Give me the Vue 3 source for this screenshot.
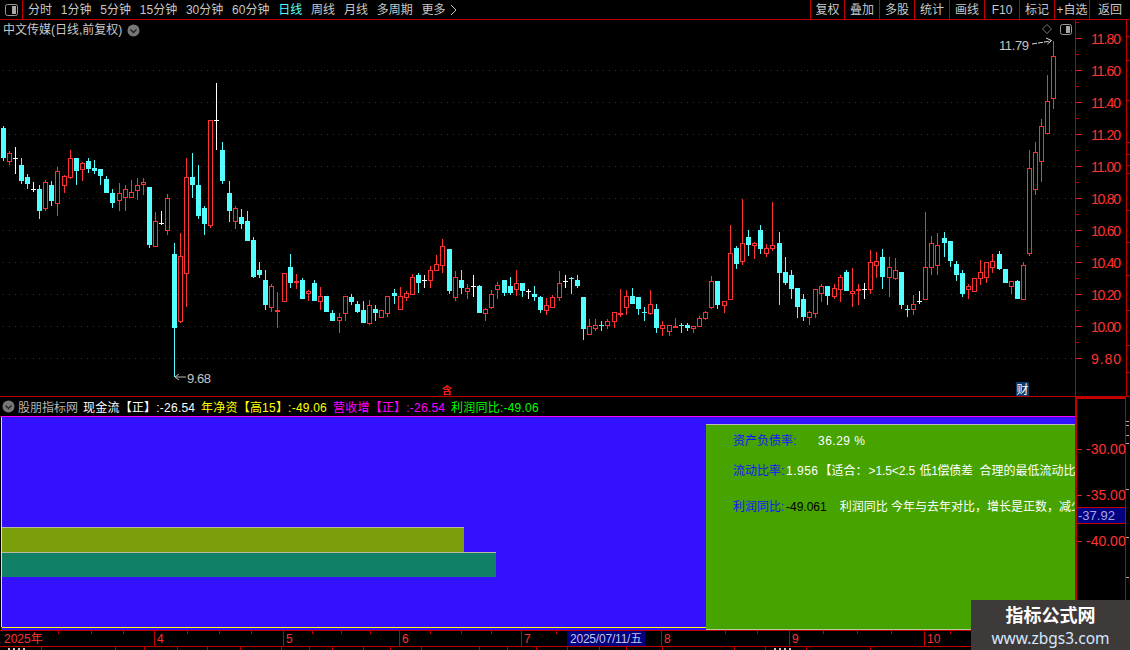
<script setup>
// wickTop, bodyTop, bodyBottom, wickBottom, colour (c cyan / r red / w white)
const raw = [
  [126,128,158,161,'c'],[151,153,162,165,'r'],[147,158,158,174,'w'],[158,165,181,184,'c'],[174,177,184,189,'c'],
  [182,189,189,192,'w'],[185,189,211,219,'c'],[180,182,209,211,'r'],[181,185,201,206,'c'],[167,171,204,216,'r'],
  [175,176,186,193,'r'],[150,158,178,179,'r'],[158,158,171,185,'c'],[162,163,170,181,'r'],[158,161,169,173,'c'],
  [160,168,171,174,'c'],[169,169,176,185,'c'],[176,179,193,193,'c'],[189,193,203,208,'c'],[183,193,201,211,'r'],
  [185,189,198,211,'r'],[180,192,198,198,'r'],[178,185,191,200,'r'],[178,182,185,195,'r'],[187,187,245,248,'c'],
  [212,221,247,247,'r'],[211,223,223,225,'w'],[194,198,231,235,'r'],[243,254,328,377,'c'],[233,256,322,323,'r'],
  [158,177,274,307,'r'],[153,177,185,198,'c'],[165,185,216,219,'c'],[206,208,224,235,'c'],[120,120,226,228,'r'],
  [83,120,120,150,'w'],[142,150,181,184,'c'],[181,193,211,222,'c'],[206,208,222,229,'r'],[209,217,224,229,'c'],
  [211,221,241,241,'c'],[237,240,277,278,'c'],[262,270,275,278,'c'],
  [270,280,305,310,'c'],[284,286,308,312,'r'],[292,310,311,328,'r'],[273,273,302,302,'r'],[254,267,283,288,'c'],
  [274,281,282,289,'r'],[278,280,299,299,'c'],[290,291,294,301,'r'],[280,283,301,301,'c'],[287,296,302,310,'r'],
  [296,296,312,312,'c'],[310,313,321,321,'c'],[313,317,321,333,'r'],[296,296,314,321,'r'],[294,297,302,305,'c'],
  [301,304,312,313,'c'],[301,310,323,323,'c'],[300,305,324,325,'r'],[305,309,313,321,'c'],[310,310,318,318,'r'],
  [296,296,314,317,'r'],[289,293,296,304,'c'],[287,296,310,310,'r'],[291,293,298,301,'r'],[274,277,295,295,'r'],
  [273,275,283,293,'c'],[275,280,280,288,'w'],[266,270,281,288,'r'],[255,264,271,271,'r'],[239,246,266,273,'r'],
  [249,249,291,294,'c'],[271,277,298,301,'r'],[270,280,288,294,'c'],[284,288,292,299,'r'],[275,286,286,297,'w'],
  [285,286,313,313,'c'],[308,309,314,321,'r'],[290,294,308,309,'r'],[282,285,290,299,'r'],[280,280,293,296,'c'],
  [277,286,293,295,'c'],[270,283,290,296,'r'],
  [283,283,291,297,'c'],[289,291,291,299,'w'],[286,294,297,301,'c'],[296,297,310,313,'c'],[298,305,311,315,'r'],
  [295,297,308,308,'r'],[271,283,298,301,'r'],[275,281,281,288,'w'],[277,278,278,294,'c'],[275,280,286,288,'c'],
  [297,297,329,340,'c'],[319,326,335,335,'r'],[319,325,329,331,'r'],[321,325,325,331,'c'],[319,321,326,329,'r'],
  [312,312,322,328,'r'],[289,313,314,317,'r'],[290,296,308,315,'r'],[288,296,304,304,'c'],[297,297,309,315,'c'],
  [307,312,312,321,'c'],[290,304,314,315,'r'],[304,309,328,333,'c'],[321,325,329,336,'r'],[325,325,332,336,'r'],
  [318,326,327,328,'r'],[323,325,325,333,'c'],[323,325,328,331,'c'],[326,326,329,333,'r'],[316,318,327,327,'r'],
  [311,312,319,320,'r'],[276,281,308,309,'r'],[281,281,305,309,'c'],[301,301,306,313,'r'],[225,253,300,300,'r'],
  [246,248,264,269,'c'],[199,243,262,265,'r'],[230,237,245,256,'c'],[242,243,246,259,'r'],[225,230,249,254,'c'],
  [244,248,254,257,'r'],[202,245,249,251,'r'],[232,243,273,305,'c'],[257,272,283,285,'c'],[270,275,289,299,'c'],
  [288,288,307,318,'c'],
  [294,299,317,321,'c'],[311,312,318,325,'r'],[289,289,314,318,'r'],[284,286,294,302,'r'],[286,286,296,305,'c'],
  [284,288,297,299,'r'],[275,277,290,302,'r'],[270,272,291,291,'c'],[268,291,294,307,'r'],[284,289,290,305,'r'],
  [283,289,289,299,'w'],[250,262,290,294,'r'],[252,261,266,278,'r'],[249,257,277,289,'c'],[257,267,278,297,'r'],
  [258,270,279,280,'r'],[272,272,305,309,'c'],[305,309,309,317,'c'],[295,304,310,315,'r'],[291,301,301,304,'w'],
  [212,267,300,300,'r'],[236,243,268,275,'r'],[233,245,266,275,'r'],[232,238,243,257,'c'],[241,241,261,267,'c'],
  [261,264,275,281,'c'],[270,273,294,297,'c'],[284,286,290,299,'r'],[278,278,292,292,'r'],[260,272,279,285,'r'],
  [262,262,278,283,'r'],[254,261,268,273,'r'],[251,254,269,270,'c'],[269,269,283,283,'c'],[281,281,287,294,'r'],
  [280,281,299,299,'c'],[262,265,300,300,'r'],
  [150,168,254,256,'r'],[142,152,190,195,'r'],[119,126,162,182,'r'],[75,101,134,134,'r'],[41,56,99,109,'r']
]
const colours = { c: '#54ffff', r: '#ff3232', w: '#ffffff' }
// bars sit 6px apart with one extra pixel every ninth bar
const barX = i => Math.min(3 + 6 * i + (i ? Math.floor((i - 1) / 9) : 0), 1053)
const candles = raw.map((c, i) => ({
  cx: barX(i),
  wickTop: c[0], top: c[1], bottom: c[2], wickBottom: c[3],
  colour: colours[c[4]],
  hollow: c[4] === 'r' && c[2] - c[1] > 1,
  flat: c[2] - c[1] <= 1
}))

const priceTicks = Array.from({ length: 11 }, (_, i) => ({ y: 38 + 32 * i, label: (11.8 - 0.2 * i).toFixed(2) }))
const gridLines = priceTicks.slice(1).map(t => t.y + 0.5)
const minorTicks = Array.from({ length: 11 }, (_, i) => 22 + 32 * i)
const rimTicks = [36, 60, 100, 142, 154, 165, 173, 210, 242, 275, 310, 345, 372]

const leftTabs = ['分时', '1分钟', '5分钟', '15分钟', '30分钟', '60分钟', '日线', '周线', '月线', '多周期']
const rightTabs = [
  { name: '复权', w: 34 }, { name: '叠加', w: 35 }, { name: '多股', w: 35 }, { name: '统计', w: 35 }, { name: '画线', w: 35 },
  { name: 'F10', w: 35 }, { name: '标记', w: 35 }, { name: '+自选', w: 35 }, { name: '返回', w: 41 }
]

const indicators = [
  { text: '现金流【正】:-26.54', cls: 'white', w: 118 },
  { text: '年净资【高15】:-49.06', cls: 'yellow', w: 132 },
  { text: '营收增【正】:-26.54', cls: 'magenta', w: 118 },
  { text: '利润同比:-49.06', cls: 'green', w: 100 }
]

const subTicks = [
  { y: 50, label: '-30.00' }, { y: 96, label: '-35.00' }, { y: 142, label: '-40.00' }
]
const subRimTicks = [24, 28, 38, 46, 92, 140, 180]

const timeLabels = [
  { x: 0, text: '2025年' }, { x: 154, text: '4' }, { x: 283, text: '5' }, { x: 399, text: '6' },
  { x: 521, text: '7' }, { x: 661, text: '8' }, { x: 789, text: '9' }, { x: 924, text: '10' }
]
const timeTicks = [58, 91, 123, 187, 219, 251, 312, 341, 370, 430, 461, 491, 556, 725, 757, 823, 857, 891, 950]

const stripStops = [42, 116, 145, 178, 208, 241, 282, 310, 333, 364, 391, 422, 480, 508, 537, 568, 600, 627, 663, 735, 766, 807, 871, 1130]
const stripCells = stripStops.map((x, i) => x - (i ? stripStops[i - 1] : 0))
</script>

<template>
  <div class="screen">
    <header class="toolbar">
      <div class="panel-btn">
        <svg width="13" height="12" viewBox="0 0 13 12">
          <rect x="0.5" y="0.5" width="12" height="11" rx="2" fill="none" stroke="#9a9a9a" />
          <rect x="7" y="2" width="4" height="8" fill="#a8a8a8" />
        </svg>
      </div>
      <nav class="tabs">
        <span v-for="t in leftTabs" :key="t" :class="{ active: t === '日线' }">{{ t }}</span>
        <span class="more">更多
          <svg width="7" height="12" viewBox="0 0 7 12"><path d="M1 1l5 5-5 5" fill="none" stroke="#c8c8c8" /></svg>
        </span>
      </nav>
      <div class="right-tabs">
        <span v-for="t in rightTabs" :key="t.name" :style="{ width: t.w + 'px' }">{{ t.name }}</span>
      </div>
    </header>

    <section class="main-chart">
      <div class="title">
        中文传媒(日线,前复权)
        <svg class="round" width="13" height="13" viewBox="0 0 13 13">
          <circle cx="6.5" cy="6.5" r="6" fill="#777" />
          <path d="M3.5 5.5l3 3 3-3" fill="none" stroke="#222" stroke-width="1.4" />
        </svg>
      </div>
      <svg class="kline" width="1130" height="376" viewBox="0 20 1130 376">
        <g shape-rendering="crispEdges">
          <line v-for="y in gridLines" :key="y" x1="3" x2="1075" :y1="y" :y2="y" stroke="#b00000" stroke-dasharray="1 5" />
          <g v-for="(c, i) in candles" :key="i">
            <rect :x="c.cx" :y="c.wickTop" width="1" :height="c.wickBottom - c.wickTop" :fill="c.colour" />
            <rect v-if="c.flat" :x="c.cx - 2" :y="c.top" width="5" :height="c.bottom - c.top + 1" :fill="c.colour" />
            <template v-else>
              <rect :x="c.cx - 2" :y="c.top" width="5" :height="c.bottom - c.top" :fill="c.colour" />
              <rect v-if="c.hollow" :x="c.cx - 1" :y="c.top + 1" width="3" :height="c.bottom - c.top - 2" fill="#000" />
            </template>
          </g>
          <rect x="1075" y="20" width="1" height="376" fill="#c00000" />
          <rect x="1126" y="20" width="1" height="376" fill="#c00000" />
          <rect v-for="t in priceTicks" :key="t.y" x="1076" :y="t.y" width="6" height="1" fill="#e02020" />
          <rect v-for="y in minorTicks" :key="y" x="1076" :y="y" width="3" height="1" fill="#c00000" />
          <rect v-for="y in rimTicks" :key="y" x="1127" :y="y" width="3" height="1" fill="#c00000" />
        </g>
        <text v-for="t in priceTicks" :key="t.label" x="1091" :y="t.y + 6" class="price" textLength="30">{{ t.label }}</text>

        <!-- high / low markers -->
        <text x="999" y="50" class="mark" textLength="30">11.79</text>
        <path d="M1032 44l19-3" stroke="#ddd" stroke-dasharray="5 1" fill="none" />
        <path d="M1046 38l5.5 2.5-4 3.5" stroke="#ddd" fill="none" />
        <text x="187" y="383" class="mark" textLength="24">9.68</text>
        <path d="M186 377h-11M179 374l-4 3 4 3" stroke="#bbb" fill="none" />

        <path d="M1047 24.5l4.5 4.5-4.5 4.5-4.5-4.5z" fill="none" stroke="#777" />
        <rect x="1060.5" y="24.5" width="11" height="10" rx="2" fill="none" stroke="#9a9a9a" />
        <rect x="1066" y="26" width="4" height="7" fill="#a8a8a8" />

        <text x="442" y="394" class="event">含</text>
        <rect x="1016" y="382" width="13" height="14" fill="#0a3a6a" />
        <text x="1016.5" y="393.5" class="badge">财</text>
      </svg>
    </section>

    <section class="sub-chart">
      <div class="sub-left">
        <div class="sub-head">
          <svg width="13" height="13" viewBox="0 0 13 13">
            <circle cx="6.5" cy="6.5" r="6" fill="#777" />
            <path d="M3.5 5.5l3 3 3-3" fill="none" stroke="#222" stroke-width="1.4" />
          </svg>
          <span class="name">股朋指标网</span>
          <span v-for="it in indicators" :key="it.text" class="ind" :class="it.cls" :style="{ width: it.w + 'px' }">{{ it.text }}</span>
        </div>
        <div class="plot">
          <i class="top-end"></i>
          <div class="bar olive"></div>
          <div class="bar teal"></div>
          <i class="yellow-line"></i>
          <div class="info">
            <div class="row row-debt"><b>资产负债率:</b><span class="num">36.29 %</span></div>
            <div class="row row-ratio">
              <b>流动比率:</b><span class="num">1.956</span>
              <span class="fit">【适合：</span><span class="range">&gt;1.5&lt;2.5</span>
              <span class="low">低1偿债差</span><span class="best">合理的最低流动比】</span>
            </div>
            <div class="row row-profit"><b>利润同比:</b><span class="dark">-49.061</span><span class="note">利润同比 今年与去年对比，增长是正数，减少是负数</span></div>
          </div>
        </div>
      </div>
      <div class="sub-axis">
        <div v-for="t in subTicks" :key="t.label" class="sub-tick" :style="{ top: t.y + 'px' }">
          <i></i><span>{{ t.label }}</span>
        </div>
        <div class="cur">-37.92</div>
      </div>
      <div class="rim">
        <i v-for="y in subRimTicks" :key="y" :style="{ top: y + 'px' }"></i>
      </div>
    </section>

    <section class="time-axis">
      <i v-for="x in timeTicks" :key="x" class="t-tick" :style="{ left: x + 'px' }"></i>
      <span v-for="t in timeLabels" :key="t.text" class="t-label" :class="{ 't-year': t.x === 0 }" :style="{ left: t.x + 'px' }">{{ t.text }}</span>
      <span class="t-cursor">2025/07/11/五</span>
    </section>

    <footer class="strip">
      <span v-for="(w, i) in stripCells" :key="i" :style="{ width: w + 'px' }">
        <i v-if="i === 0" class="bit"></i>
        <i v-if="i === 21" class="bit"></i>
      </span>
    </footer>

    <div class="watermark">
      <strong>指标公式网</strong>
      <span>www.zbgs3.com</span>
    </div>
  </div>
</template>

<style>
html, body { background: #000; }
</style>

<style scoped>
.screen {
  position: relative;
  width: 1130px;
  height: 650px;
  overflow: hidden;
  background: #000;
  color: #c8c8c8;
  font-family: "Liberation Sans", "Noto Sans CJK SC", sans-serif;
  font-size: 12px;
}

.toolbar {
  display: flex;
  height: 19px;
  border-bottom: 1px solid #c00000;
  line-height: 20px;
}
.panel-btn {
  width: 22px;
  border-right: 1px solid #c00000;
  display: flex;
  align-items: center;
  justify-content: center;
}
.tabs {
  display: flex;
  gap: 8.8px;
  padding-left: 5px;
}
.tabs .active { color: #54ffff; }
.more { display: flex; align-items: center; gap: 4px; }
.right-tabs {
  display: flex;
  margin-left: auto;
}
.right-tabs span {
  box-sizing: border-box;
  border-left: 1px solid #c00000;
  text-align: center;
  white-space: nowrap;
}

.main-chart {
  position: relative;
  height: 376px;
  border-bottom: 1px solid #c00000;
}
.kline { display: block; }
.title {
  position: absolute;
  left: 3px;
  top: 1px;
  display: flex;
  align-items: center;
  gap: 5px;
  line-height: 18px;
  z-index: 1;
}
.price { fill: #ff3232; font-size: 14px; }
.mark { fill: #c4c4c4; font-size: 13px; }
.event { fill: #ff1a1a; font-size: 10px; font-weight: 700; }
.badge { fill: #fff; font-size: 12px; }

.sub-chart {
  display: flex;
  height: 233px;
}
.sub-left {
  width: 1075px;
  display: flex;
  flex-direction: column;
}
.sub-head {
  display: flex;
  align-items: center;
  height: 19px;
  padding-left: 2px;
  white-space: nowrap;
}
.sub-head svg { margin-right: 3px; }
.sub-head .name { width: 65px; color: #b4b4b4; }
.sub-head span { flex: none; }
.ind { letter-spacing: 0.22px; }
.white { color: #fff; }
.yellow { color: #ffff00; }
.magenta { color: #ff00ff; }
.green { color: #00ff00; }

.plot {
  position: relative;
  flex: 1;
  box-sizing: border-box;
  overflow: hidden;
  background: #3311ff;
  border-top: 1px solid #ff00ff;
  border-left: 1px solid #000;
  padding-top: 110px;
}
.plot::before {
  content: "";
  position: absolute;
  left: 0;
  top: 0;
  bottom: 3px;
  width: 1px;
  background: #d8d8f0;
}
.top-end {
  position: absolute;
  right: 0;
  top: -1px;
  width: 22px;
  height: 1px;
  background: #c0c0c0;
}
.bar {
  box-sizing: border-box;
  height: 25px;
  margin-left: 1px;
  border-top: 1px solid #b8b8a0;
}
.olive { width: 462px; background: #7a9f0a; }
.teal { width: 494px; background: #118066; }
.yellow-line {
  position: absolute;
  left: 1px;
  right: 0;
  bottom: 2px;
  height: 1px;
  background: #ffff00;
}

.info {
  position: absolute;
  left: 705px;
  right: 0;
  top: 7px;
  bottom: 0;
  box-sizing: border-box;
  overflow: hidden;
  background: #46a300;
  border-top: 1px solid #b8b8b8;
  border-bottom: 1px solid #b4c8a0;
  color: #fff;
  white-space: nowrap;
}
.row {
  display: flex;
  line-height: 18px;
  padding-left: 27px;
}
.row b { font-weight: 400; color: #1414ff; width: 53px; flex: none; }
.row-debt { margin-top: 7px; }
.row-debt b { width: 85px; }
.row-ratio { margin-top: 12px; }
.num { letter-spacing: 0.5px; }
.fit { width: 49px; flex: none; margin-left: 1px; }
.range { width: 46px; flex: none; letter-spacing: -0.1px; }
.low { margin-left: 5px; width: 55px; flex: none; letter-spacing: -0.3px; }
.best { margin-left: 5px; }
.row-profit { margin-top: 18px; }
.dark { color: #000; }
.note { margin-left: 13px; }

.sub-axis {
  position: relative;
  box-sizing: border-box;
  width: 51px;
  border-left: 2px solid #c00000;
  border-top: 2px solid #c00000;
  border-right: 1px solid #c00000;
}
.sub-tick {
  position: absolute;
  left: 0;
  display: flex;
  align-items: center;
  height: 0;
  color: #ff3232;
  font-size: 14px;
}
.sub-tick i {
  display: block;
  width: 5px;
  height: 1px;
  margin-right: 4px;
  background: #e02020;
}
.cur {
  position: absolute;
  left: 0;
  right: 0;
  top: 108px;
  height: 15px;
  line-height: 15px;
  background: #000080;
  border-top: 1px solid #c00000;
  border-bottom: 1px solid #c00000;
  color: #a8a8e8;
  font-size: 13px;
  padding-left: 1px;
}
.rim { position: relative; flex: 1; }
.rim i {
  position: absolute;
  left: 0;
  width: 3px;
  height: 1px;
  background: #c0a0a0;
}

.time-axis {
  position: relative;
  height: 15px;
  border-top: 1px solid #c00000;
  border-bottom: 1px solid #c00000;
  color: #ff3232;
}
.t-tick {
  position: absolute;
  top: 0;
  width: 1px;
  height: 3px;
  background: #c00000;
}
.t-label {
  position: absolute;
  top: 0;
  height: 15px;
  line-height: 16px;
  padding-left: 2px;
  border-left: 1px solid #c00000;
}
.t-label.t-year { border-left: 0; padding-left: 4px; }
.t-cursor {
  position: absolute;
  left: 567px;
  top: 0;
  width: 78px;
  height: 15px;
  line-height: 16px;
  text-align: center;
  background: #000080;
  color: #c0c0e8;
  white-space: nowrap;
  letter-spacing: -0.2px;
}

.strip {
  display: flex;
  height: 3px;
  overflow: hidden;
}
.strip span {
  box-sizing: border-box;
  flex: none;
  height: 3px;
  border-right: 1px solid #c00000;
  padding-left: 8px;
}
.bit {
  display: block;
  width: 20px;
  height: 2px;
  margin-top: 1px;
  background: repeating-linear-gradient(90deg, #c8c8c8 0 2px, #000 2px 5px);
}

.watermark {
  position: absolute;
  right: 0;
  bottom: 0;
  width: 159px;
  height: 50px;
  background: #3f3a3a;
  display: flex;
  flex-direction: column;
  align-items: center;
  padding-top: 4px;
  box-sizing: border-box;
}
.watermark strong {
  color: #fff;
  font-size: 18px;
  line-height: 24px;
  font-weight: 700;
}
.watermark span {
  color: #d4e8ff;
  font-family: "Noto Sans", sans-serif;
  font-size: 15.5px;
  line-height: 20px;
}
</style>
